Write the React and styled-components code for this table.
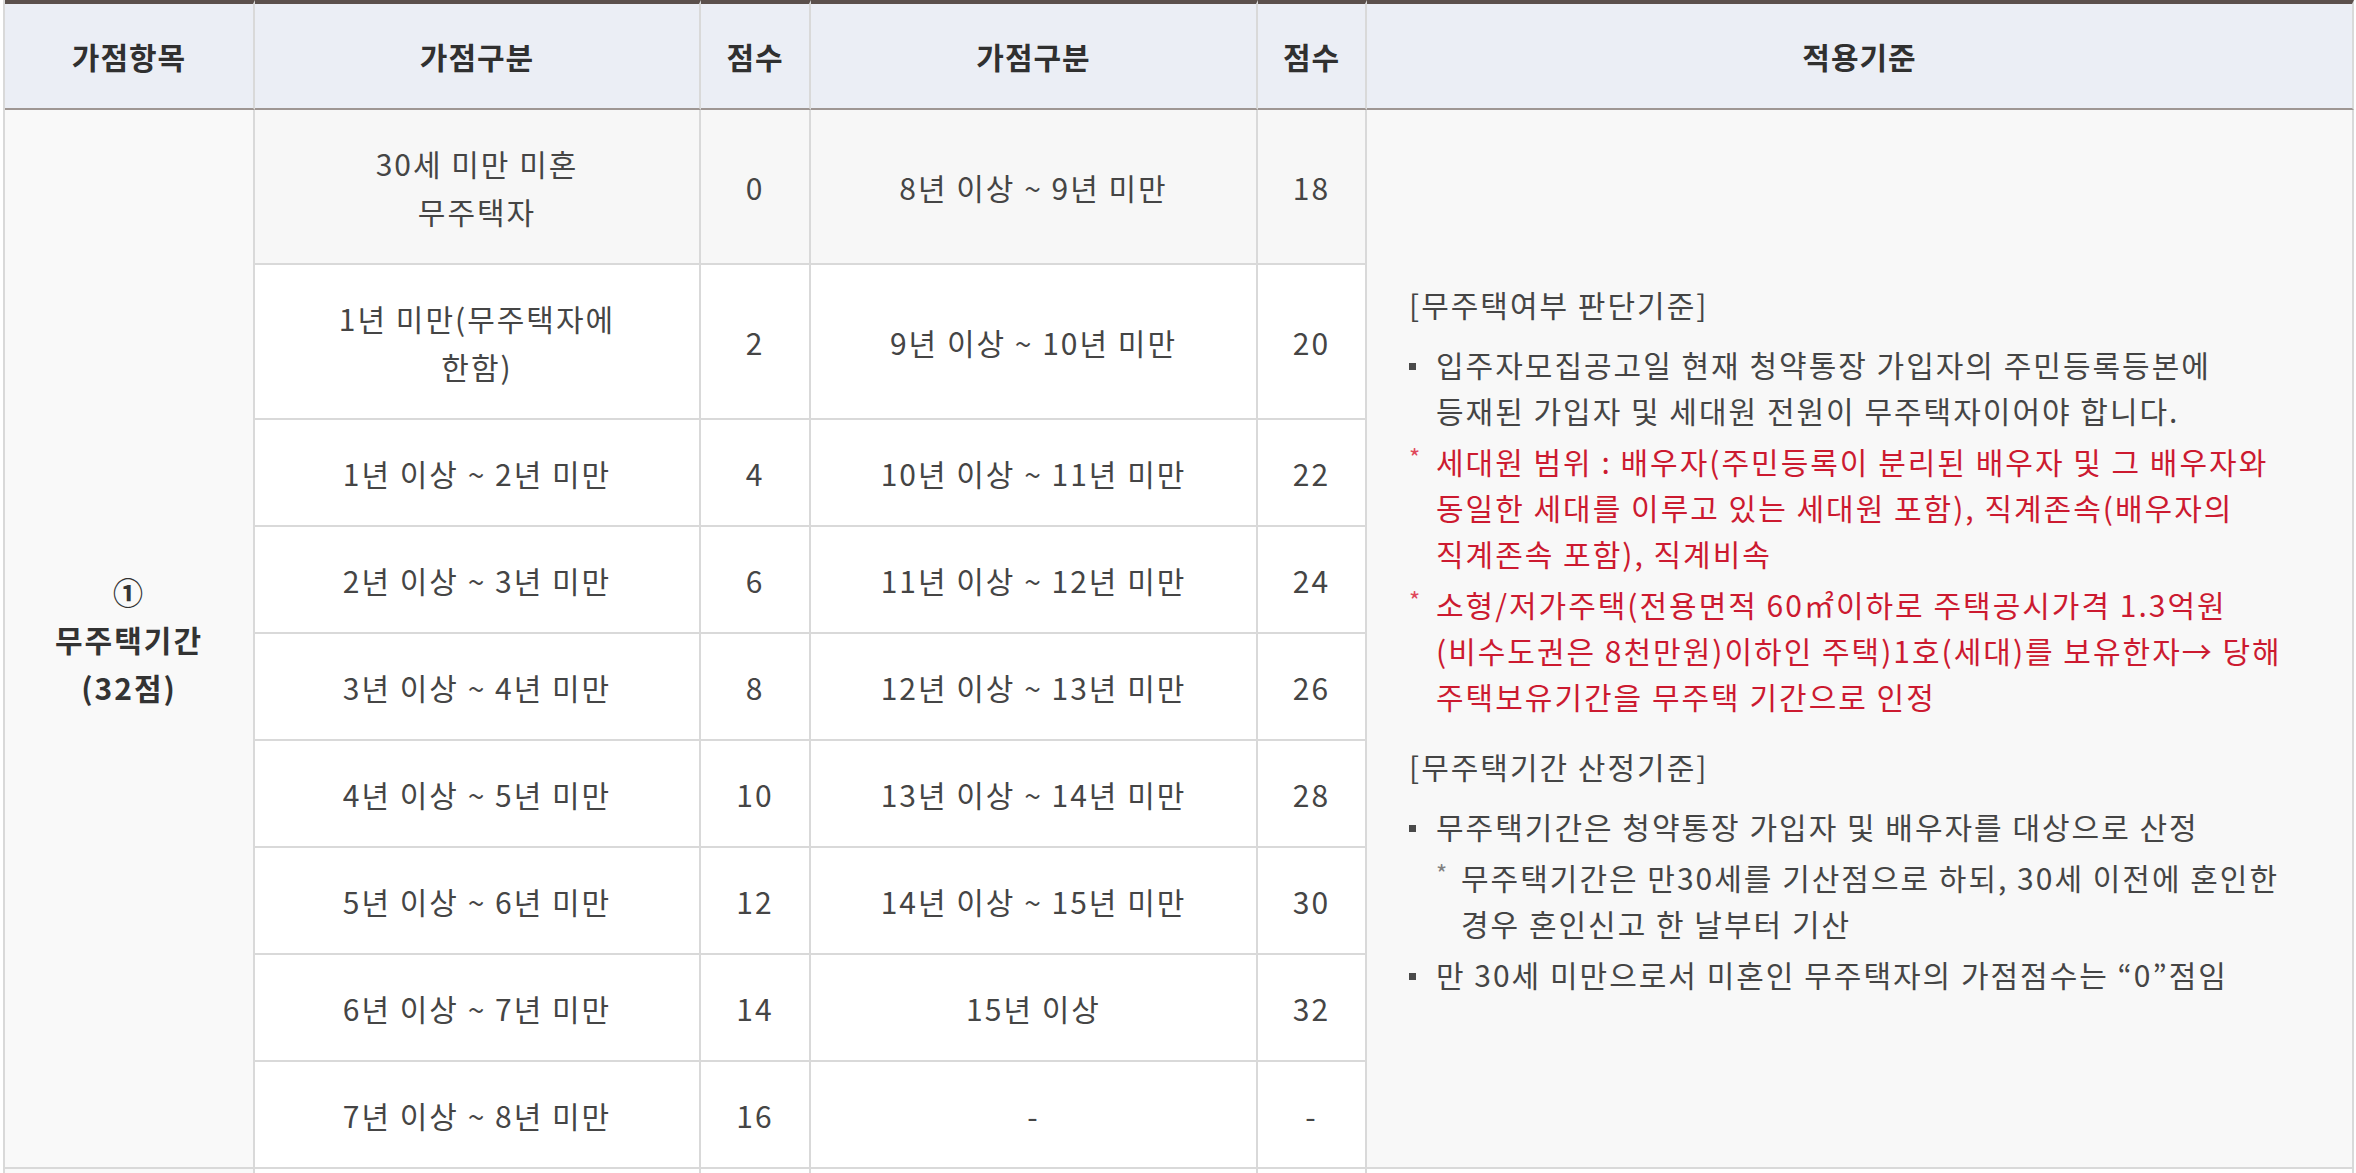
import styled, { createGlobalStyle } from "styled-components";

// 무주택기간 가점표 - header + 9 rows, the first and last columns span all rows
const GlobalStyle = createGlobalStyle`
  body {
    margin: 0;
    background: #fff;
    font-family: "Noto Sans CJK KR", "Noto Sans", sans-serif;
  }
`;

const rows = [
  ["30세 미만 미혼\n무주택자", "0", "8년 이상 ~ 9년 미만", "18"],
  ["1년 미만(무주택자에\n한함)", "2", "9년 이상 ~ 10년 미만", "20"],
  ["1년 이상 ~ 2년 미만", "4", "10년 이상 ~ 11년 미만", "22"],
  ["2년 이상 ~ 3년 미만", "6", "11년 이상 ~ 12년 미만", "24"],
  ["3년 이상 ~ 4년 미만", "8", "12년 이상 ~ 13년 미만", "26"],
  ["4년 이상 ~ 5년 미만", "10", "13년 이상 ~ 14년 미만", "28"],
  ["5년 이상 ~ 6년 미만", "12", "14년 이상 ~ 15년 미만", "30"],
  ["6년 이상 ~ 7년 미만", "14", "15년 이상", "32"],
  ["7년 이상 ~ 8년 미만", "16", "-", "-"],
];

const columns = [
  { label: "가점항목", w: 250 },
  { label: "가점구분", w: 446 },
  { label: "점수", w: 110 },
  { label: "가점구분", w: 447 },
  { label: "점수", w: 109 },
  { label: "적용기준", w: 987 },
];

const ScoreTable = () => {
  return (
    <Wrap>
      <GlobalStyle />
      <Table>
        <thead>
          <tr>
            {columns.map((c, i) => (
              <HeadCell key={i} $w={c.w}>
                {c.label}
              </HeadCell>
            ))}
          </tr>
        </thead>
        <tbody>
          {rows.map((r, i) => (
            <tr key={i}>
              {i === 0 && (
                <ItemCell rowSpan={rows.length}>
                  ①<br />
                  무주택기간
                  <br />
                  (32점)
                </ItemCell>
              )}
              {r.map((v, j) => (
                <Cell key={j} $shaded={i === 0}>
                  {v}
                </Cell>
              ))}
              {i === 0 && (
                <Criteria rowSpan={rows.length}>
                  <Section>
                    <SectionTitle>[무주택여부 판단기준]</SectionTitle>
                    <List>
                      <Item>
                        <Marker $kind="square" />
                        <span>
                          입주자모집공고일 현재 청약통장 가입자의 주민등록등본에
                          <br />
                          등재된 가입자 및 세대원 전원이 무주택자이어야 합니다.
                        </span>
                      </Item>
                      <Item $red>
                        <Marker $kind="star">*</Marker>
                        <span>
                          세대원 범위 : 배우자(주민등록이 분리된 배우자 및 그 배우자와
                          <br />
                          동일한 세대를 이루고 있는 세대원 포함), 직계존속(배우자의
                          <br />
                          직계존속 포함), 직계비속
                        </span>
                      </Item>
                      <Item $red>
                        <Marker $kind="star">*</Marker>
                        <span>
                          소형/저가주택(전용면적 60㎡이하로 주택공시가격 1.3억원
                          <br />
                          (비수도권은 8천만원)이하인 주택)1호(세대)를 보유한자→ 당해
                          <br />
                          주택보유기간을 무주택 기간으로 인정
                        </span>
                      </Item>
                    </List>
                  </Section>
                  <Section $gap>
                    <SectionTitle>[무주택기간 산정기준]</SectionTitle>
                    <List>
                      <Item>
                        <Marker $kind="square" />
                        <span>무주택기간은 청약통장 가입자 및 배우자를 대상으로 산정</span>
                      </Item>
                      <Item $sub>
                        <Marker $kind="star" $sub>
                          *
                        </Marker>
                        <span>
                          무주택기간은 만30세를 기산점으로 하되, 30세 이전에 혼인한
                          <br />
                          경우 혼인신고 한 날부터 기산
                        </span>
                      </Item>
                      <Item>
                        <Marker $kind="square" />
                        <span>만 30세 미만으로서 미혼인 무주택자의 가점점수는 “0”점임</span>
                      </Item>
                    </List>
                  </Section>
                </Criteria>
              )}
            </tr>
          ))}
          <tr>
            {columns.map((c, i) => (
              <EmptyCell key={i} $first={i === 0} />
            ))}
          </tr>
        </tbody>
      </Table>
    </Wrap>
  );
};

export default function App() {
  return <ScoreTable />;
}

const Wrap = styled.div`
  padding: 0 4px 0 3px;
`;

const Table = styled.table`
  width: 2349px;
  table-layout: fixed;
  border-collapse: separate;
  border-spacing: 0;
  border-left: 2px solid #d9d9d9;
  font-size: 30px;
  line-height: 48px;
  letter-spacing: 2px;
  color: #454545;
  th,
  td {
    box-sizing: border-box;
  }
`;

const HeadCell = styled.th`
  width: ${(p) => p.$w}px;
  padding: 28px 8px;
  background: #ebeef5;
  border-top: 4px solid #5b504c;
  border-bottom: 2px solid #9e9693;
  border-right: 2px solid #d9d9d9;
  font-weight: 700;
  letter-spacing: 1px;
  color: #303030;
  text-align: center;
`;

const Cell = styled.td`
  padding: 28.5px 8px;
  background: ${(p) => (p.$shaded ? "#f7f7f7" : "#fff")};
  border-right: 2px solid #d9d9d9;
  border-bottom: 2px solid #d9d9d9;
  text-align: center;
  vertical-align: middle;
  white-space: pre-line;
`;

const ItemCell = styled.td`
  background: #f9f9f9;
  border-right: 2px solid #d9d9d9;
  border-bottom: 2px solid #d9d9d9;
  font-weight: 700;
  color: #333;
  text-align: center;
  vertical-align: middle;
`;

const Criteria = styled.td`
  padding: 0 12px 0 42px;
  background: #f8f8f8;
  border-right: 2px solid #d9d9d9;
  border-bottom: 2px solid #d9d9d9;
  text-align: left;
  vertical-align: middle;
  white-space: nowrap;
  line-height: 46px;
`;

const EmptyCell = styled.td`
  height: 60px;
  background: ${(p) => (p.$first ? "#f9f9f9" : "#fff")};
  border-right: 2px solid #d9d9d9;
`;

const Section = styled.div`
  margin-top: ${(p) => (p.$gap ? "24px" : "0")};
`;

const SectionTitle = styled.div`
  color: #454545;
`;

const List = styled.ul`
  list-style: none;
  margin: 14px 0 0;
  padding: 0;
`;

const Item = styled.li`
  display: flex;
  margin-top: 5px;
  padding-left: ${(p) => (p.$sub ? "27px" : "0")};
  color: ${(p) => (p.$red ? "#cc1a30" : "#454545")};
  &:first-child {
    margin-top: 0;
  }
`;

const Marker = styled.span`
  flex: 0 0 ${(p) => (p.$sub ? "25px" : "27px")};
  height: 46px;
  display: flex;
  align-items: ${(p) => (p.$kind === "square" ? "center" : "flex-start")};
  font-size: 24px;
  line-height: 38px;
  letter-spacing: 0;
  color: ${(p) => (p.$sub ? "#808080" : "#e0485a")};
  &::before {
    content: "";
    display: ${(p) => (p.$kind === "square" ? "block" : "none")};
    width: 7px;
    height: 7px;
    margin-top: 6px;
    background: #4a4a4a;
  }
`;
